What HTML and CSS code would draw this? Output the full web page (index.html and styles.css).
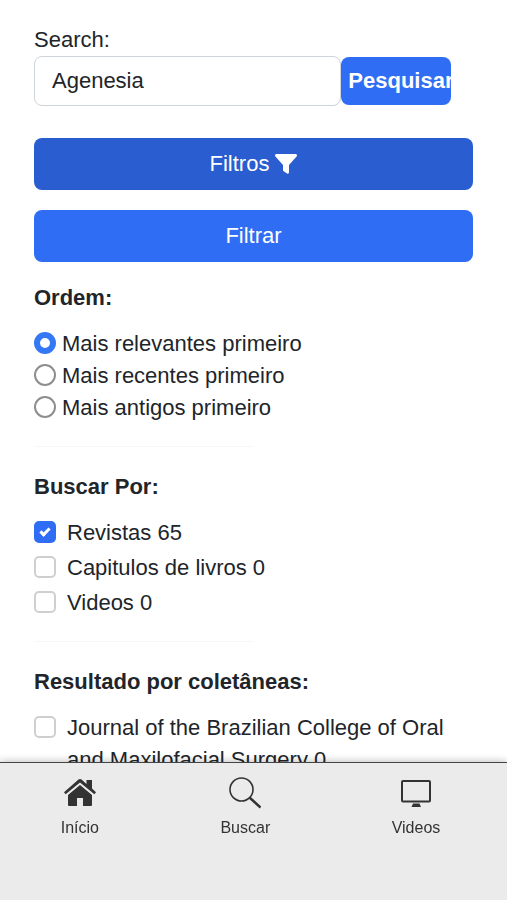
FILE: index.html
```html
<!DOCTYPE html>
<html lang="pt-BR">
<head>
	<title>Buscar</title>
	<meta charset="UTF-8">
	<meta name="viewport" content="width=device-width, initial-scale=1">
	<link rel="stylesheet" href="styles.css">
</head>
<body>
	<main class="container">
		<form>
			<label for="search">Search:</label>
			<div class="search-row">
				<input type="text" id="search" class="search-input" value="Agenesia">
				<button type="submit" class="btn btn-search">Pesquisar</button>
			</div>

			<button type="button" class="btn btn-block active">
				Filtros
				<svg class="funnel" viewBox="0 0 22 20" aria-hidden="true">
					<path fill="currentColor" d="M1.500 0h19c1.300 0 1.900 1.400 1.100 2.400L14 11V18.500c0 1-1.100 1.500-1.900 1L8.700 17.200c-.5-.3-.7-.7-.7-1.200V11L.4 2.400C-.4 1.400.2 0 1.500 0z"/>
				</svg>
			</button>
			<button type="submit" class="btn btn-block">Filtrar</button>

			<h2>Ordem:</h2>
			<div class="order">
				<label><input type="radio" name="order" checked> Mais relevantes primeiro</label>
				<label><input type="radio" name="order"> Mais recentes primeiro</label>
				<label><input type="radio" name="order"> Mais antigos primeiro</label>
			</div>
			<hr>

			<h2>Buscar Por:</h2>
			<div class="checks">
				<label><input type="checkbox" checked> Revistas 65</label>
				<label><input type="checkbox"> Capitulos de livros 0</label>
				<label><input type="checkbox"> Videos 0</label>
			</div>
			<hr>

			<h2>Resultado por coletâneas:</h2>
			<div class="checks">
				<label><input type="checkbox"> Journal of the Brazilian College of Oral and Maxilofacial Surgery 0</label>
			</div>
		</form>
	</main>

	<nav class="bottom-nav">
		<a href="#">
			<svg viewBox="0 0 32 32" aria-hidden="true">
				<path fill="currentColor" d="M16 8l12 10V28a1 1 0 0 1-1 1h-8v-8h-6v8H5a1 1 0 0 1-1-1V18z"/>
				<path fill="currentColor" d="M16 2c.6 0 1 .2 1.500.6L22.500 7V3H28v8.500l4 3.800-1.600 2L16 5.500 1.600 17.300 0 15.300 14.500 2.600c.5-.4.9-.6 1.500-.6z"/>
			</svg>
			Início
		</a>
		<a href="#">
			<svg viewBox="0 0 32 32" fill="none" stroke="currentColor" aria-hidden="true">
				<circle cx="12.500" cy="12.500" r="11.500" stroke-width="1.600"/>
				<path d="M20.500 20.500L31.500 30.500" stroke-width="2.400"/>
			</svg>
			Buscar
		</a>
		<a href="#">
			<svg viewBox="0 0 32 32" aria-hidden="true">
				<rect x="2" y="4" width="28" height="20.500" rx="1" fill="none" stroke="currentColor" stroke-width="2"/>
				<path fill="currentColor" d="M13 26.500h6.500l1.500 3.500H11.500z"/>
			</svg>
			Videos
		</a>
	</nav>
</body>
</html>
```

FILE: styles.css
```css
* {
	box-sizing: border-box;
}

body {
	margin: 0;
	background: #fff;
	color: #212529;
	font: 22px/32px "Liberation Sans", Arial, sans-serif;
}

.container {
	padding: 24px 34px 88px;
}

.search-row {
	display: flex;
	align-items: center;
	margin-bottom: 32px;
}

.search-input {
	width: 70%;
	height: 50px;
	padding: 0 17px;
	border: 1px solid #ced4da;
	border-radius: 8px;
	background: #fff;
	color: #212529;
	font: inherit;
}

.btn {
	border: none;
	border-radius: 8px;
	background: #306df5;
	color: #fff;
	font: inherit;
	cursor: pointer;
}

.btn-search {
	width: 25%;
	height: 48px;
	padding: 0 7px;
	font-weight: bold;
	text-align: left;
	overflow: hidden;
}

.btn-block {
	display: flex;
	align-items: center;
	justify-content: center;
	gap: 6px;
	width: 100%;
	height: 52px;
	margin-bottom: 20px;
}

.btn-block.active {
	background: #295dd0;
}

.funnel {
	width: 22px;
	height: 20px;
}

h2 {
	margin: 0 0 14px;
	font-size: 22px;
	line-height: 32px;
}

hr {
	width: 50%;
	margin: 22px 0 24px;
	border: none;
	border-top: 1px solid #f7f7f7;
}

.order,
.checks {
	display: flex;
	flex-direction: column;
}

.checks {
	gap: 3px;
}

.order label,
.checks label {
	display: flex;
	align-items: flex-start;
	gap: 6px;
}

.checks label {
	gap: 11px;
}

input[type="radio"],
input[type="checkbox"] {
	flex: none;
	appearance: none;
	width: 22px;
	height: 22px;
	margin: 4px 0 0;
	background: #fff;
}

input[type="radio"] {
	border: 2px solid #8e8e8e;
	border-radius: 50%;
}

input[type="radio"]:checked {
	border: 6px solid #3478f6;
}

input[type="checkbox"] {
	border: 2px solid #cfcfcf;
	border-radius: 5px;
}

input[type="checkbox"]:checked {
	display: flex;
	align-items: center;
	justify-content: center;
	border-color: #306df5;
	background: #306df5;
}

/* tick mark */
input[type="checkbox"]:checked::before {
	content: "";
	width: 3px;
	height: 7px;
	margin-bottom: 3px;
	border: solid #fff;
	border-width: 0 3px 3px 0;
	transform: rotate(45deg);
}

.bottom-nav {
	position: fixed;
	left: 0;
	right: 0;
	bottom: 0;
	display: flex;
	justify-content: space-around;
	height: 138px;
	padding: 14px 6px 0 0;
	border-top: 1px solid #444;
	background: #ebebeb;
	box-shadow: 0 0 8px rgba(0, 0, 0, .3);
}

.bottom-nav a {
	display: flex;
	flex-direction: column;
	align-items: center;
	height: 64px;
	gap: 7px;
	color: #333;
	font-size: 16px;
	line-height: 24px;
	text-decoration: none;
}

.bottom-nav svg {
	width: 32px;
	height: 32px;
}
```
